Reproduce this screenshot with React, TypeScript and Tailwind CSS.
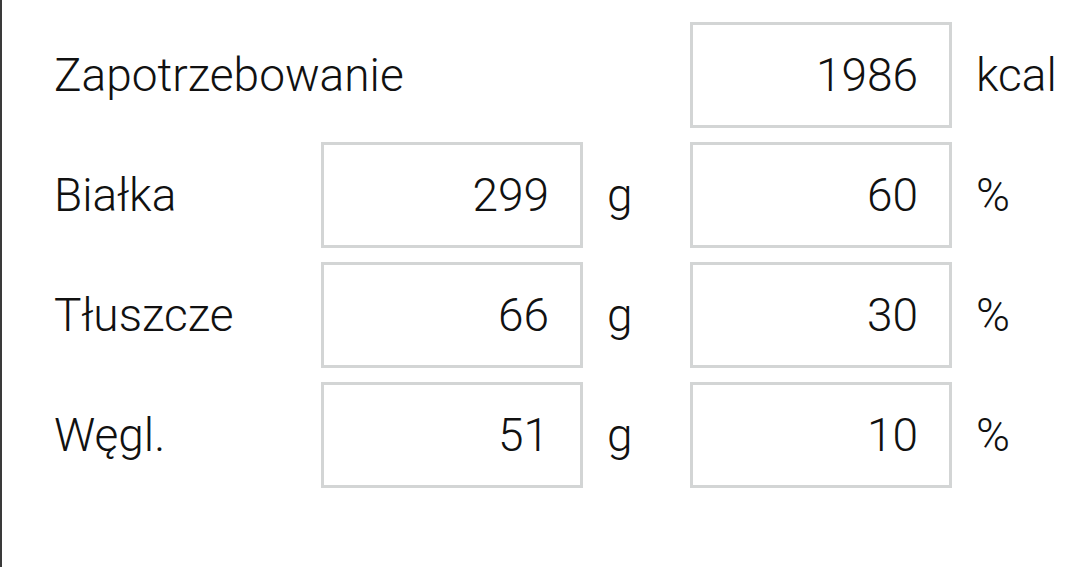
import React from 'react';

type MacroRow = {
  label: string;
  grams: number;
  percent: number;
};

const MACROS: MacroRow[] = [
  { label: 'Białka', grams: 299, percent: 60 },
  { label: 'Tłuszcze', grams: 66, percent: 30 },
  { label: 'Węgl.', grams: 51, percent: 10 },
];

function ValueBox({ value }: { value: number }) {
  return (
    <div className="flex h-[106px] w-[262px] items-center justify-end border-[3px] border-[#d3d5d5] pr-[31px]">
      {value}
    </div>
  );
}

function Unit({ children }: { children: React.ReactNode }) {
  return <div className="flex items-center pl-[24px]">{children}</div>;
}

export default function App() {
  return (
    <div
      className="h-[567px] w-full border-l-2 border-[#3a3a3a] bg-white text-[46px] font-light leading-none text-[#111]"
      style={{ fontFamily: 'Roboto, "Liberation Sans", sans-serif' }}
    >
      <div className="grid grid-cols-[267px_262px_107px_262px_1fr] gap-y-[14px] pl-[52px] pt-[22px]">
        <div className="col-span-3 flex items-center">Zapotrzebowanie</div>
        <ValueBox value={1986} />
        <Unit>kcal</Unit>

        {MACROS.map((row) => (
          <React.Fragment key={row.label}>
            <div className="flex items-center">{row.label}</div>
            <ValueBox value={row.grams} />
            <Unit>g</Unit>
            <ValueBox value={row.percent} />
            <Unit>%</Unit>
          </React.Fragment>
        ))}
      </div>
    </div>
  );
}
